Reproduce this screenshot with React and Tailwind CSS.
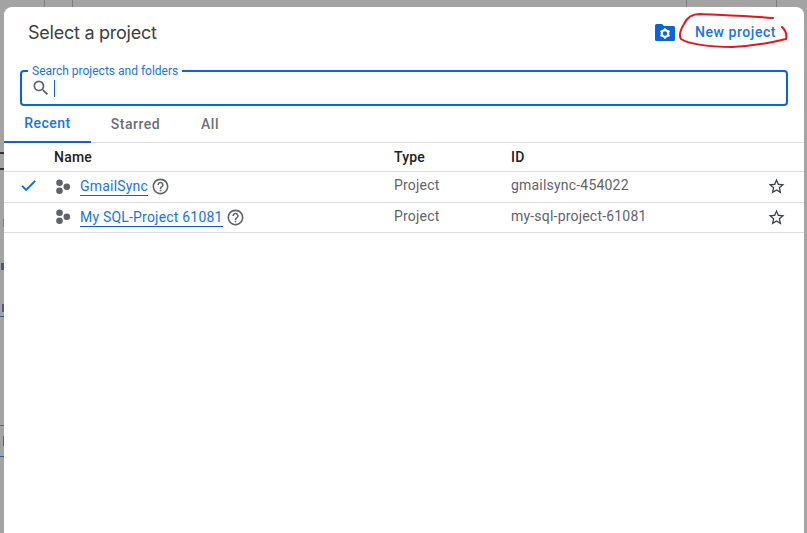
import React from "react";

const rows = [
  { name: "GmailSync", id: "gmailsync-454022", selected: true },
  { name: "My SQL-Project 61081", id: "my-sql-project-61081", selected: false },
];

function ProjectIcon() {
  return (
    <svg width="16" height="16" viewBox="0 0 16 16" className="ml-[2px] shrink-0 fill-[#5f6368]">
      <circle cx="3.500" cy="3.700" r="3.300" />
      <circle cx="3.500" cy="11.700" r="3.300" />
      <circle cx="10.800" cy="7.700" r="3.300" />
    </svg>
  );
}

function FolderGear() {
  return (
    <svg width="20" height="17" viewBox="0 0 20 17">
      <path d="M1.500 0H7l2 2h9.500A1.500 1.500 0 0 1 20 3.500v12a1.500 1.500 0 0 1-1.500 1.500h-17A1.500 1.500 0 0 1 0 15.500v-14A1.500 1.500 0 0 1 1.500 0z" fill="#0b63d8" />
      <circle cx="10" cy="9.500" r="3.300" fill="none" stroke="#fff" strokeWidth="2.200" />
      <path d="M10 4.300v2M10 12.700v2M5.500 6.900l1.700 1M12.800 11.100l1.700 1M5.500 12.100l1.700-1M12.800 7.900l1.700-1" stroke="#fff" strokeWidth="1.800" />
    </svg>
  );
}

function SearchIcon() {
  return (
    <svg width="20" height="20" viewBox="0 0 24 24" className="fill-[#5f6368]">
      <path d="M15.500 14h-.79l-.28-.27A6.471 6.471 0 0 0 16 9.500 6.500 6.500 0 1 0 9.500 16c1.610 0 3.090-.59 4.230-1.570l.27.28v.79l5 4.990L20.490 19l-4.990-5zm-6 0C7.010 14 5 11.990 5 9.500S7.010 5 9.500 5 14 7.010 14 9.500 11.990 14 9.500 14z" />
    </svg>
  );
}

function CheckIcon() {
  return (
    <svg width="19" height="19" viewBox="0 0 24 24" className="fill-[#0b63d8] stroke-[#0b63d8] stroke-[0.5px]">
      <path d="M9 16.170L4.830 12l-1.410 1.410L9 19 21 7l-1.410-1.410z" />
    </svg>
  );
}

function HelpIcon() {
  return (
    <svg width="19" height="19" viewBox="0 0 24 24" className="ml-[3px] shrink-0 fill-[#5f6368]">
      <path d="M11 18h2v-2h-2v2zm1-16C6.480 2 2 6.480 2 12s4.480 10 10 10 10-4.480 10-10S17.520 2 12 2zm0 18c-4.410 0-8-3.590-8-8s3.590-8 8-8 8 3.590 8 8-3.590 8-8 8zm0-14c-2.210 0-4 1.790-4 4h2c0-1.100.9-2 2-2s2 .9 2 2c0 2-3 1.750-3 5h2c0-2.250 3-2.500 3-5 0-2.210-1.790-4-4-4z" />
    </svg>
  );
}

function StarIcon() {
  return (
    <svg width="19" height="19" viewBox="0 0 24 24" className="mr-[18px] mt-[2px] shrink-0 fill-[#3c4043]">
      <path d="M22 9.240l-7.190-.62L12 2 9.190 8.630 2 9.240l5.460 4.730L5.820 21 12 17.270 18.180 21l-1.630-7.030L22 9.240zM12 15.400l-3.760 2.270 1-4.280-3.320-2.880 4.380-.38L12 6.100l1.710 4.040 4.380.38-3.320 2.880 1 4.280L12 15.400z" />
    </svg>
  );
}

export default function App() {
  return (
    <div className="relative w-[807px] h-[533px] overflow-hidden bg-[#a3a3a3] font-['Roboto',sans-serif]">
      {/* bits of the page behind the dialog */}
      <div className="absolute top-0 left-[44px] w-px h-[7px] bg-[#7d7d7d]" />
      <div className="absolute top-0 left-[72px] w-px h-[7px] bg-[#7d7d7d]" />
      <div className="absolute top-0 left-[686px] w-px h-[7px] bg-[#7d7d7d]" />
      <div className="absolute top-0 left-[776px] w-px h-[7px] bg-[#7d7d7d]" />
      <div className="absolute top-[152px] left-0 w-[4px] h-[2px] bg-[#333333]" />
      <div className="absolute top-[168px] left-0 w-[4px] h-[2px] bg-[#333333]" />
      <div className="absolute top-[219px] left-[3px] w-px h-[8px] bg-[#7a7a9a]" />
      <div className="absolute top-[263px] left-[1px] w-[3px] h-[7px] bg-[#4a5a70]" />
      <div className="absolute top-[304px] left-[2px] w-[2px] h-[8px] bg-[#4f5590]" />
      <div className="absolute top-[316px] left-0 w-[4px] h-px bg-[#2f5c9e]" />
      <div className="absolute top-[425px] left-0 w-[4px] h-px bg-[#566c8c]" />
      <div className="absolute top-[436px] left-[3px] w-px h-[10px] bg-[#5a5a8a]" />
      <div className="absolute top-[456px] left-0 w-[4px] h-px bg-[#2f5c9e]" />

      <div className="absolute left-[4px] top-[7px] w-[800px] h-[540px] bg-white rounded-t-[8px] flex flex-col">
        {/* header */}
        <div className="flex items-center justify-between h-[50px] pl-[24px] pr-[28px]">
          <h1 className="font-['Inter',sans-serif] text-[18px] font-normal text-[#3c4043] tracking-[-0.25px]">Select a project</h1>
          <div className="flex items-center gap-[20px]">
            <FolderGear />
            <span className="text-[14px] font-medium text-[#1a73e8] tracking-[0.55px]">New project</span>
          </div>
        </div>

        {/* search */}
        <div className="relative mx-[16px] mt-[13px] h-[36px] border-2 border-[#0b63d8] rounded-[4px] flex items-center pl-[9px]">
          <span className="absolute left-[6px] -top-[8px] bg-white px-[4px] text-[12px] leading-[14px] text-[#1a73e8]">Search projects and folders</span>
          <SearchIcon />
          <div className="ml-[3px] w-px h-[17px] bg-[#0b63d8]" />
        </div>

        {/* tabs */}
        <div className="flex h-[37px] border-b border-[#dadce0] text-[14px] font-medium tracking-[0.5px] text-[#6b6f74]">
          <div className="w-[87px] -mb-px border-b-2 border-[#0b63d8] text-[#1a73e8] flex items-center justify-center">Recent</div>
          <div className="w-[89px] flex items-center justify-center">Starred</div>
          <div className="w-[58px] pl-[2px] flex items-center justify-center">All</div>
        </div>

        {/* table */}
        <div className="flex items-center h-[29px] border-b border-[#dadce0] text-[14px] font-medium tracking-[0.2px] text-[#202124]">
          <div className="w-[50px]" />
          <div className="w-[340px]">Name</div>
          <div className="w-[117px]">Type</div>
          <div>ID</div>
        </div>
        {rows.map((row) => (
          <div key={row.id} className="flex items-center h-[30.500px] pb-[2px] border-b border-[#dadce0] text-[14px] tracking-[0.2px] text-[#5f6368]">
            <div className="w-[50px] pl-[15px]">
              {row.selected && <CheckIcon />}
            </div>
            <div className="w-[340px] mt-[2px] flex items-center">
              <ProjectIcon />
              <span className="ml-[8px] text-[#1a73e8] border-b border-[#0b63d8] leading-[18px]">{row.name}</span>
              <HelpIcon />
            </div>
            <div className="w-[117px]">Project</div>
            <div className="flex-1">{row.id}</div>
            <StarIcon />
          </div>
        ))}
      </div>

      {/* red pen circle drawn over the screenshot */}
      <svg className="absolute left-[670px] top-[8px] pointer-events-none" width="130" height="44" viewBox="0 0 130 44" fill="none">
        <path d="M103 10C80 8 50 7 30 6C22 6 17 9 14 16C10 22 9 28 11 31C18 36 40 39 62 39C85 38 100 35 116 31C117 27 116 23 112 19" stroke="#e8141c" strokeWidth="2" strokeLinecap="round" />
      </svg>
    </div>
  );
}
